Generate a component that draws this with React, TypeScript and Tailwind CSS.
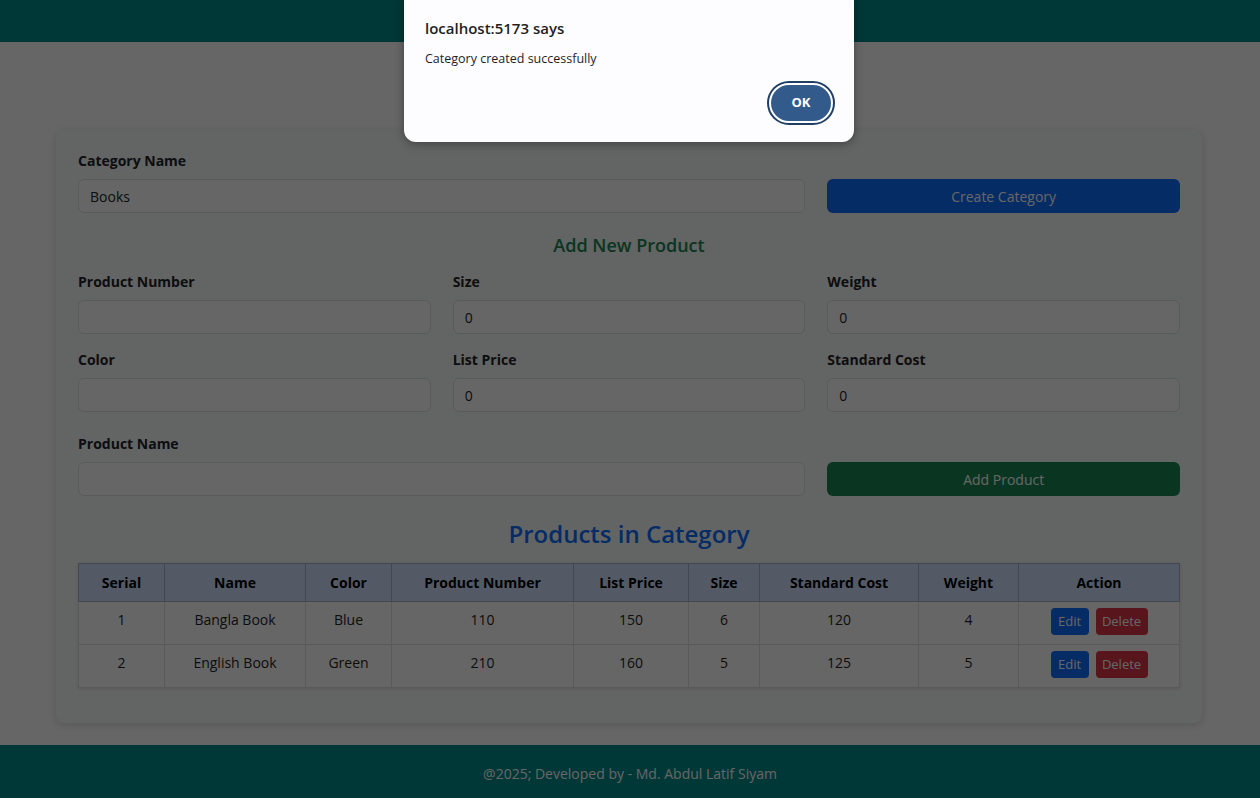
import React from "react";

const rows = [
  { serial: 1, name: "Bangla Book", color: "Blue", pn: "110", lp: "150", size: "6", sc: "120", w: "4" },
  { serial: 2, name: "English Book", color: "Green", pn: "210", lp: "160", size: "5", sc: "125", w: "5" },
];

function Field({ label, value, span }: { label: string; value?: string; span?: boolean }) {
  return (
    <div className={span ? "col-span-2" : ""}>
      <div className="text-[14px] leading-[21px] font-bold text-[#212529] mb-[8px]">{label}</div>
      <div className="h-[34px] rounded-[6px] border border-[#dee2e6] bg-white px-[11px] flex items-center text-[14px] text-[#212529]">
        {value}
      </div>
    </div>
  );
}

export default function App() {
  return (
    <div className="relative w-[1260px] h-[798px] overflow-hidden bg-white font-['Open_Sans',sans-serif] text-[#212529]">
      <header className="h-[42px] bg-[#008b8b]" />
      <main className="pt-[88px]">
        <div className="w-[1146px] ml-[56px] bg-[#f8f9fa] rounded-[8px] shadow-[0_2px_8px_rgba(0,0,0,0.15)] px-[22px] pt-[20px] pb-[35px]">
          <div className="grid grid-cols-3 gap-x-[22px] items-end">
            <Field label="Category Name" value="Books" span />
            <button className="h-[34px] rounded-[6px] bg-[#0d6efd] text-white text-[14px]">Create Category</button>
          </div>

          <h3 className="mt-[19px] text-center text-[18px] leading-[27px] font-semibold text-[#198754]">Add New Product</h3>

          <div className="mt-[12px] grid grid-cols-3 gap-x-[22px] gap-y-[15px]">
            <Field label="Product Number" />
            <Field label="Size" value="0" />
            <Field label="Weight" value="0" />
            <Field label="Color" />
            <Field label="List Price" value="0" />
            <Field label="Standard Cost" value="0" />
          </div>

          <div className="mt-[21px] grid grid-cols-3 gap-x-[22px] items-end">
            <Field label="Product Name" span />
            <button className="h-[34px] rounded-[6px] bg-[#198754] text-white text-[14px]">Add Product</button>
          </div>

          <h2 className="mt-[20px] text-center text-[24px] leading-[36px] font-semibold text-[#0d6efd]">Products in Category</h2>

          <table className="mt-[11px] w-full border-collapse text-[14px] shadow-[0_1px_3px_rgba(0,0,0,0.1)]">
            <thead>
              <tr className="h-[38px] bg-[#cfe2ff]">
                {[
                  ["Serial", "w-[86px]"],
                  ["Name", "w-[141px]"],
                  ["Color", "w-[86px]"],
                  ["Product Number", "w-[182px]"],
                  ["List Price", "w-[115px]"],
                  ["Size", "w-[71px]"],
                  ["Standard Cost", "w-[159px]"],
                  ["Weight", "w-[100px]"],
                  ["Action", ""],
                ].map(([h, w]) => (
                  <th key={h} className={`${w} border border-[#a6b5cc] font-bold text-black text-center`}>
                    {h}
                  </th>
                ))}
              </tr>
            </thead>
            <tbody>
              {rows.map((r) => (
                <tr key={r.serial} className="h-[43px] bg-white">
                  {[r.serial, r.name, r.color, r.pn, r.lp, r.size, r.sc, r.w].map((v, i) => (
                    <td key={i} className="border border-[#dee2e6] text-center align-top pt-[7px] leading-[21px]">
                      {v}
                    </td>
                  ))}
                  <td className="border border-[#dee2e6] text-center align-top pt-[6px]">
                    <div className="flex justify-center gap-[7px]">
                      <button className="w-[38px] h-[27px] rounded-[4px] bg-[#0d6efd] text-white text-[13px]">Edit</button>
                      <button className="w-[52px] h-[27px] rounded-[4px] bg-[#dc3545] text-white text-[13px]">Delete</button>
                    </div>
                  </td>
                </tr>
              ))}
            </tbody>
          </table>
        </div>
      </main>
      <footer className="mt-[22px] h-[53px] bg-[#008b8b] flex items-center justify-center pt-[3px] text-[14px] text-white">
        @2025; Developed by - Md. Abdul Latif Siyam
      </footer>

      <div className="absolute inset-0 bg-black/60" />

      <div className="absolute left-[404px] top-[-12px] w-[450px] h-[154px] rounded-[12px] bg-[#fdfdff] shadow-[0_2px_10px_rgba(0,0,0,0.35)] pt-[30px] pl-[21px] pr-[19px]">
        <div className="text-[15px] leading-[20px] font-semibold text-[#1f1f1f]">localhost:5173 says</div>
        <div className="mt-[11px] text-[12.5px] leading-[20px] text-[#1f1f1f]">Category created successfully</div>
        <div className="mt-[12px] flex justify-end">
          <div className="rounded-full bg-[#1f3e66] p-[2px]">
            <button className="w-[64px] h-[40px] rounded-full border-2 border-white bg-[#325b8c] text-white text-[13px] font-bold">
              OK
            </button>
          </div>
        </div>
      </div>
    </div>
  );
}
